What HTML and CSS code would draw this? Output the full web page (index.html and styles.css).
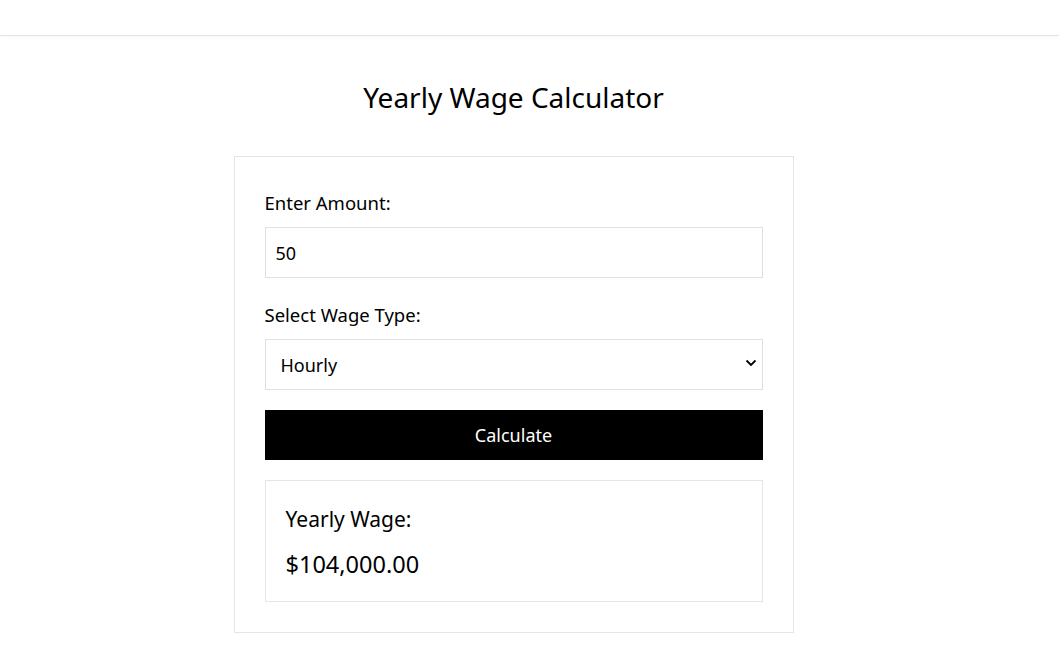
FILE: index.html
```html
<!DOCTYPE html>
<html lang="en">
<head>
<meta charset="utf-8">
<title>Yearly Wage Calculator</title>
<link rel="stylesheet" href="styles.css">
</head>
<body>
<header class="topbar"></header>
<main class="page">
  <h1 class="title">Yearly Wage Calculator</h1>
  <section class="card">
    <label class="field-label" for="amount">Enter Amount:</label>
    <input class="field" id="amount" type="text" value="50">
    <label class="field-label" for="type">Select Wage Type:</label>
    <div class="select-wrap">
      <select class="field select" id="type">
        <option>Hourly</option>
        <option>Weekly</option>
        <option>Monthly</option>
      </select>
      <svg class="chev" width="12" height="8" viewBox="0 0 12 8"><path d="M1.5 1.5 L6 6 L10.5 1.5" fill="none" stroke="#000" stroke-width="1.8"/></svg>
    </div>
    <button class="btn" type="button">Calculate</button>
    <div class="result">
      <div class="result-label">Yearly Wage:</div>
      <div class="result-value">$104,000.00</div>
    </div>
  </section>
</main>
</body>
</html>
```
FILE: styles.css
```css
* { box-sizing: border-box; }
html, body { margin: 0; padding: 0; background: #fff; }
body {
  font-family: "Noto Sans", "Open Sans", sans-serif;
  color: #000;
}
.topbar {
  height: 36px;
  border-bottom: 1px solid #e3e3e3;
  box-shadow: 0 1px 3px rgba(0,0,0,0.03);
}
.page {
  width: 1027px;
  display: flex;
  flex-direction: column;
  align-items: center;
}
.title {
  font-size: 28px;
  font-weight: 400;
  line-height: 38px;
  margin: 42px 0 40px;
}
.card {
  width: 560px;
  border: 1px solid #e5e5e5;
  padding: 30px;
  display: flex;
  flex-direction: column;
}
.field-label {
  font-size: 18.5px;
  line-height: 24px;
  margin: 4px 0 12px;
}
.field {
  height: 51px;
  border: 1px solid #e0e0e0;
  font-family: inherit;
  font-size: 18px;
  padding: 0 10px;
  color: #000;
  background: #fff;
  outline: none;
  margin-bottom: 21px;
  width: 100%;
}
.select-wrap { position: relative; }
.select {
  appearance: none;
  -webkit-appearance: none;
  border-radius: 0;
  padding: 0 15px;
  margin-bottom: 20px;
}
.chev { position: absolute; right: 6px; top: 20px; }
.btn {
  height: 50px;
  background: #000;
  color: #fff;
  border: none;
  font-family: inherit;
  font-size: 18px;
  margin-bottom: 20px;
}
.result {
  border: 1px solid #e5e5e5;
  padding: 24px 20px 21px;
}
.result-label {
  font-size: 21px;
  line-height: 28px;
  margin-bottom: 16px;
}
.result-value {
  font-size: 23.5px;
  line-height: 31px;
}
```
